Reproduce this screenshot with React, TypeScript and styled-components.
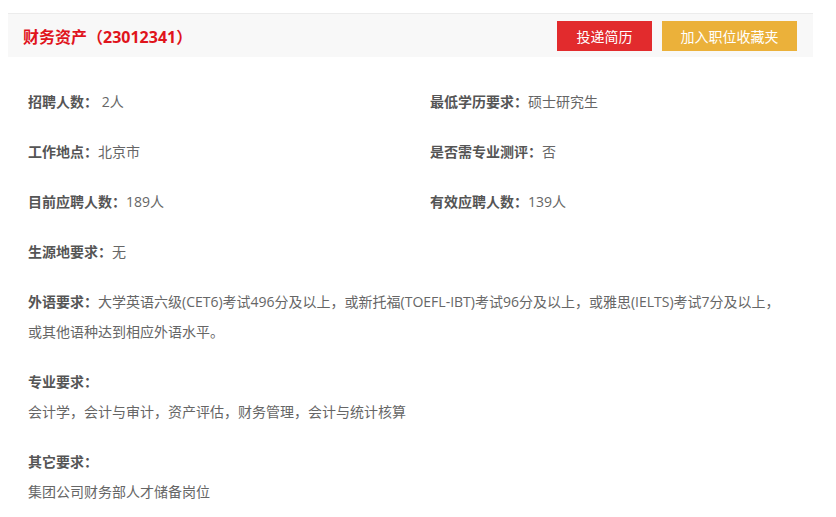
import React from "react";
import styled, { createGlobalStyle } from "styled-components";

const Global = createGlobalStyle`
  html, body { margin: 0; padding: 0; background: #fff; }
  body {
    font-family: "Open Sans", "Noto Sans CJK SC", sans-serif;
    font-size: 14px;
    color: #666;
  }
`;

const Page = styled.div`
  width: 805px;
  padding: 13px 0 0 8px;
`;

const Header = styled.div`
  display: flex;
  align-items: center;
  justify-content: space-between;
  height: 43px;
  border-top: 1px solid #ececec;
  background: #f8f8f8;
  padding: 0 16px 0 15px;
`;

const Title = styled.h1`
  margin: 0;
  font-size: 16px;
  font-weight: 700;
  color: #e0141c;
`;

const Actions = styled.div`
  display: flex;
  gap: 10px;
`;

const Button = styled.button<{ $tone: "red" | "yellow"; $w: number }>`
  width: ${(p) => p.$w}px;
  height: 30px;
  border: none;
  padding: 0;
  font-family: inherit;
  font-size: 14px;
  color: #fff;
  background: ${(p) => (p.$tone === "red" ? "#e22b2d" : "#ebb13a")};
  cursor: pointer;
`;

const Body = styled.div`
  padding: 30px 20px 0 20px;
`;

const Grid = styled.div`
  display: grid;
  grid-template-columns: 402px 1fr;
`;

const Item = styled.div`
  height: 50px;
  line-height: 30px;
`;

const Label = styled.span`
  font-weight: 700;
  color: #555;
`;

const Value = styled.span`
  color: #666;
`;

const Para = styled.div<{ $mb: number }>`
  line-height: 30px;
  margin-bottom: ${(p) => p.$mb}px;
`;

export default function App() {
  return (
    <>
      <Global />
      <Page>
        <Header>
          <Title>财务资产（23012341）</Title>
          <Actions>
            <Button $tone="red" $w={95}>投递简历</Button>
            <Button $tone="yellow" $w={135}>加入职位收藏夹</Button>
          </Actions>
        </Header>
        <Body>
          <Grid>
            <Item><Label>招聘人数：</Label><Value>&nbsp;2人</Value></Item>
            <Item><Label>最低学历要求：</Label><Value>硕士研究生</Value></Item>
            <Item><Label>工作地点：</Label><Value>北京市</Value></Item>
            <Item><Label>是否需专业测评：</Label><Value>否</Value></Item>
            <Item><Label>目前应聘人数：</Label><Value>189人</Value></Item>
            <Item><Label>有效应聘人数：</Label><Value>139人</Value></Item>
            <Item><Label>生源地要求：</Label><Value>无</Value></Item>
            <Item />
          </Grid>
          <Para $mb={20}>
            <Label>外语要求：</Label>
            <Value>大学英语六级(CET6)考试496分及以上，或新托福(TOEFL-IBT)考试96分及以上，或雅思(IELTS)考试7分及以上，或其他语种达到相应外语水平。</Value>
          </Para>
          <Para $mb={0}><Label>专业要求：</Label></Para>
          <Para $mb={20}><Value>会计学，会计与审计，资产评估，财务管理，会计与统计核算</Value></Para>
          <Para $mb={0}><Label>其它要求：</Label></Para>
          <Para $mb={0}><Value>集团公司财务部人才储备岗位</Value></Para>
        </Body>
      </Page>
    </>
  );
}
